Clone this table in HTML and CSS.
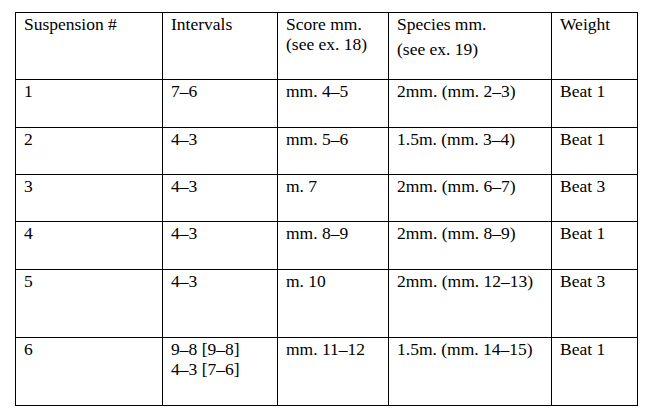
FILE: index.html
```html
<!DOCTYPE html>
<html>
<head>
<meta charset="utf-8">
<link rel="stylesheet" href="styles.css">
</head>
<body>
<table class="grid">
  <colgroup>
    <col class="c1"><col class="c2"><col class="c3"><col class="c4"><col class="c5">
  </colgroup>
  <tr class="h-head">
    <td>Suspension #</td>
    <td>Intervals</td>
    <td>Score mm.<br>(see ex. 18)</td>
    <td><div>Species mm.</div><div class="spaced">(see ex. 19)</div></td>
    <td>Weight</td>
  </tr>
  <tr class="h-48">
    <td>1</td><td>7–6</td><td>mm. 4–5</td><td>2mm. (mm. 2–3)</td><td>Beat 1</td>
  </tr>
  <tr class="h-47">
    <td>2</td><td>4–3</td><td>mm. 5–6</td><td>1.5m. (mm. 3–4)</td><td>Beat 1</td>
  </tr>
  <tr class="h-47">
    <td>3</td><td>4–3</td><td>m. 7</td><td>2mm. (mm. 6–7)</td><td>Beat 3</td>
  </tr>
  <tr class="h-48">
    <td>4</td><td>4–3</td><td>mm. 8–9</td><td>2mm. (mm. 8–9)</td><td>Beat 1</td>
  </tr>
  <tr class="h-68">
    <td>5</td><td>4–3</td><td>m. 10</td><td>2mm. (mm. 12–13)</td><td>Beat 3</td>
  </tr>
  <tr class="h-68">
    <td>6</td><td>9–8 [9–8]<br>4–3 [7–6]</td><td>mm. 11–12</td><td>1.5m. (mm. 14–15)</td><td>Beat 1</td>
  </tr>
</table>
</body>
</html>
```

FILE: styles.css
```css
html, body {
  margin: 0;
  padding: 0;
  background: #ffffff;
}

body {
  padding: 12px 0 0 15px;
  font-family: "Liberation Serif", "Times New Roman", serif;
  font-size: 17.5px;
  color: #000;
}

.grid {
  border-collapse: collapse;
  table-layout: fixed;
  width: 622px;
}

.grid td {
  border: 1px solid #000;
  padding: 1px 8px 0 8px;
  vertical-align: top;
  line-height: 20px;
  white-space: nowrap;
}

.c1 { width: 147px; }
.c2 { width: 115px; }
.c3 { width: 111px; }
.c4 { width: 163px; }
.c5 { width: 86px; }

.h-head { height: 67px; }
.h-48 { height: 48px; }
.h-47 { height: 47px; }
.h-68 { height: 68px; }

.spaced { margin-top: 5px; }
```
